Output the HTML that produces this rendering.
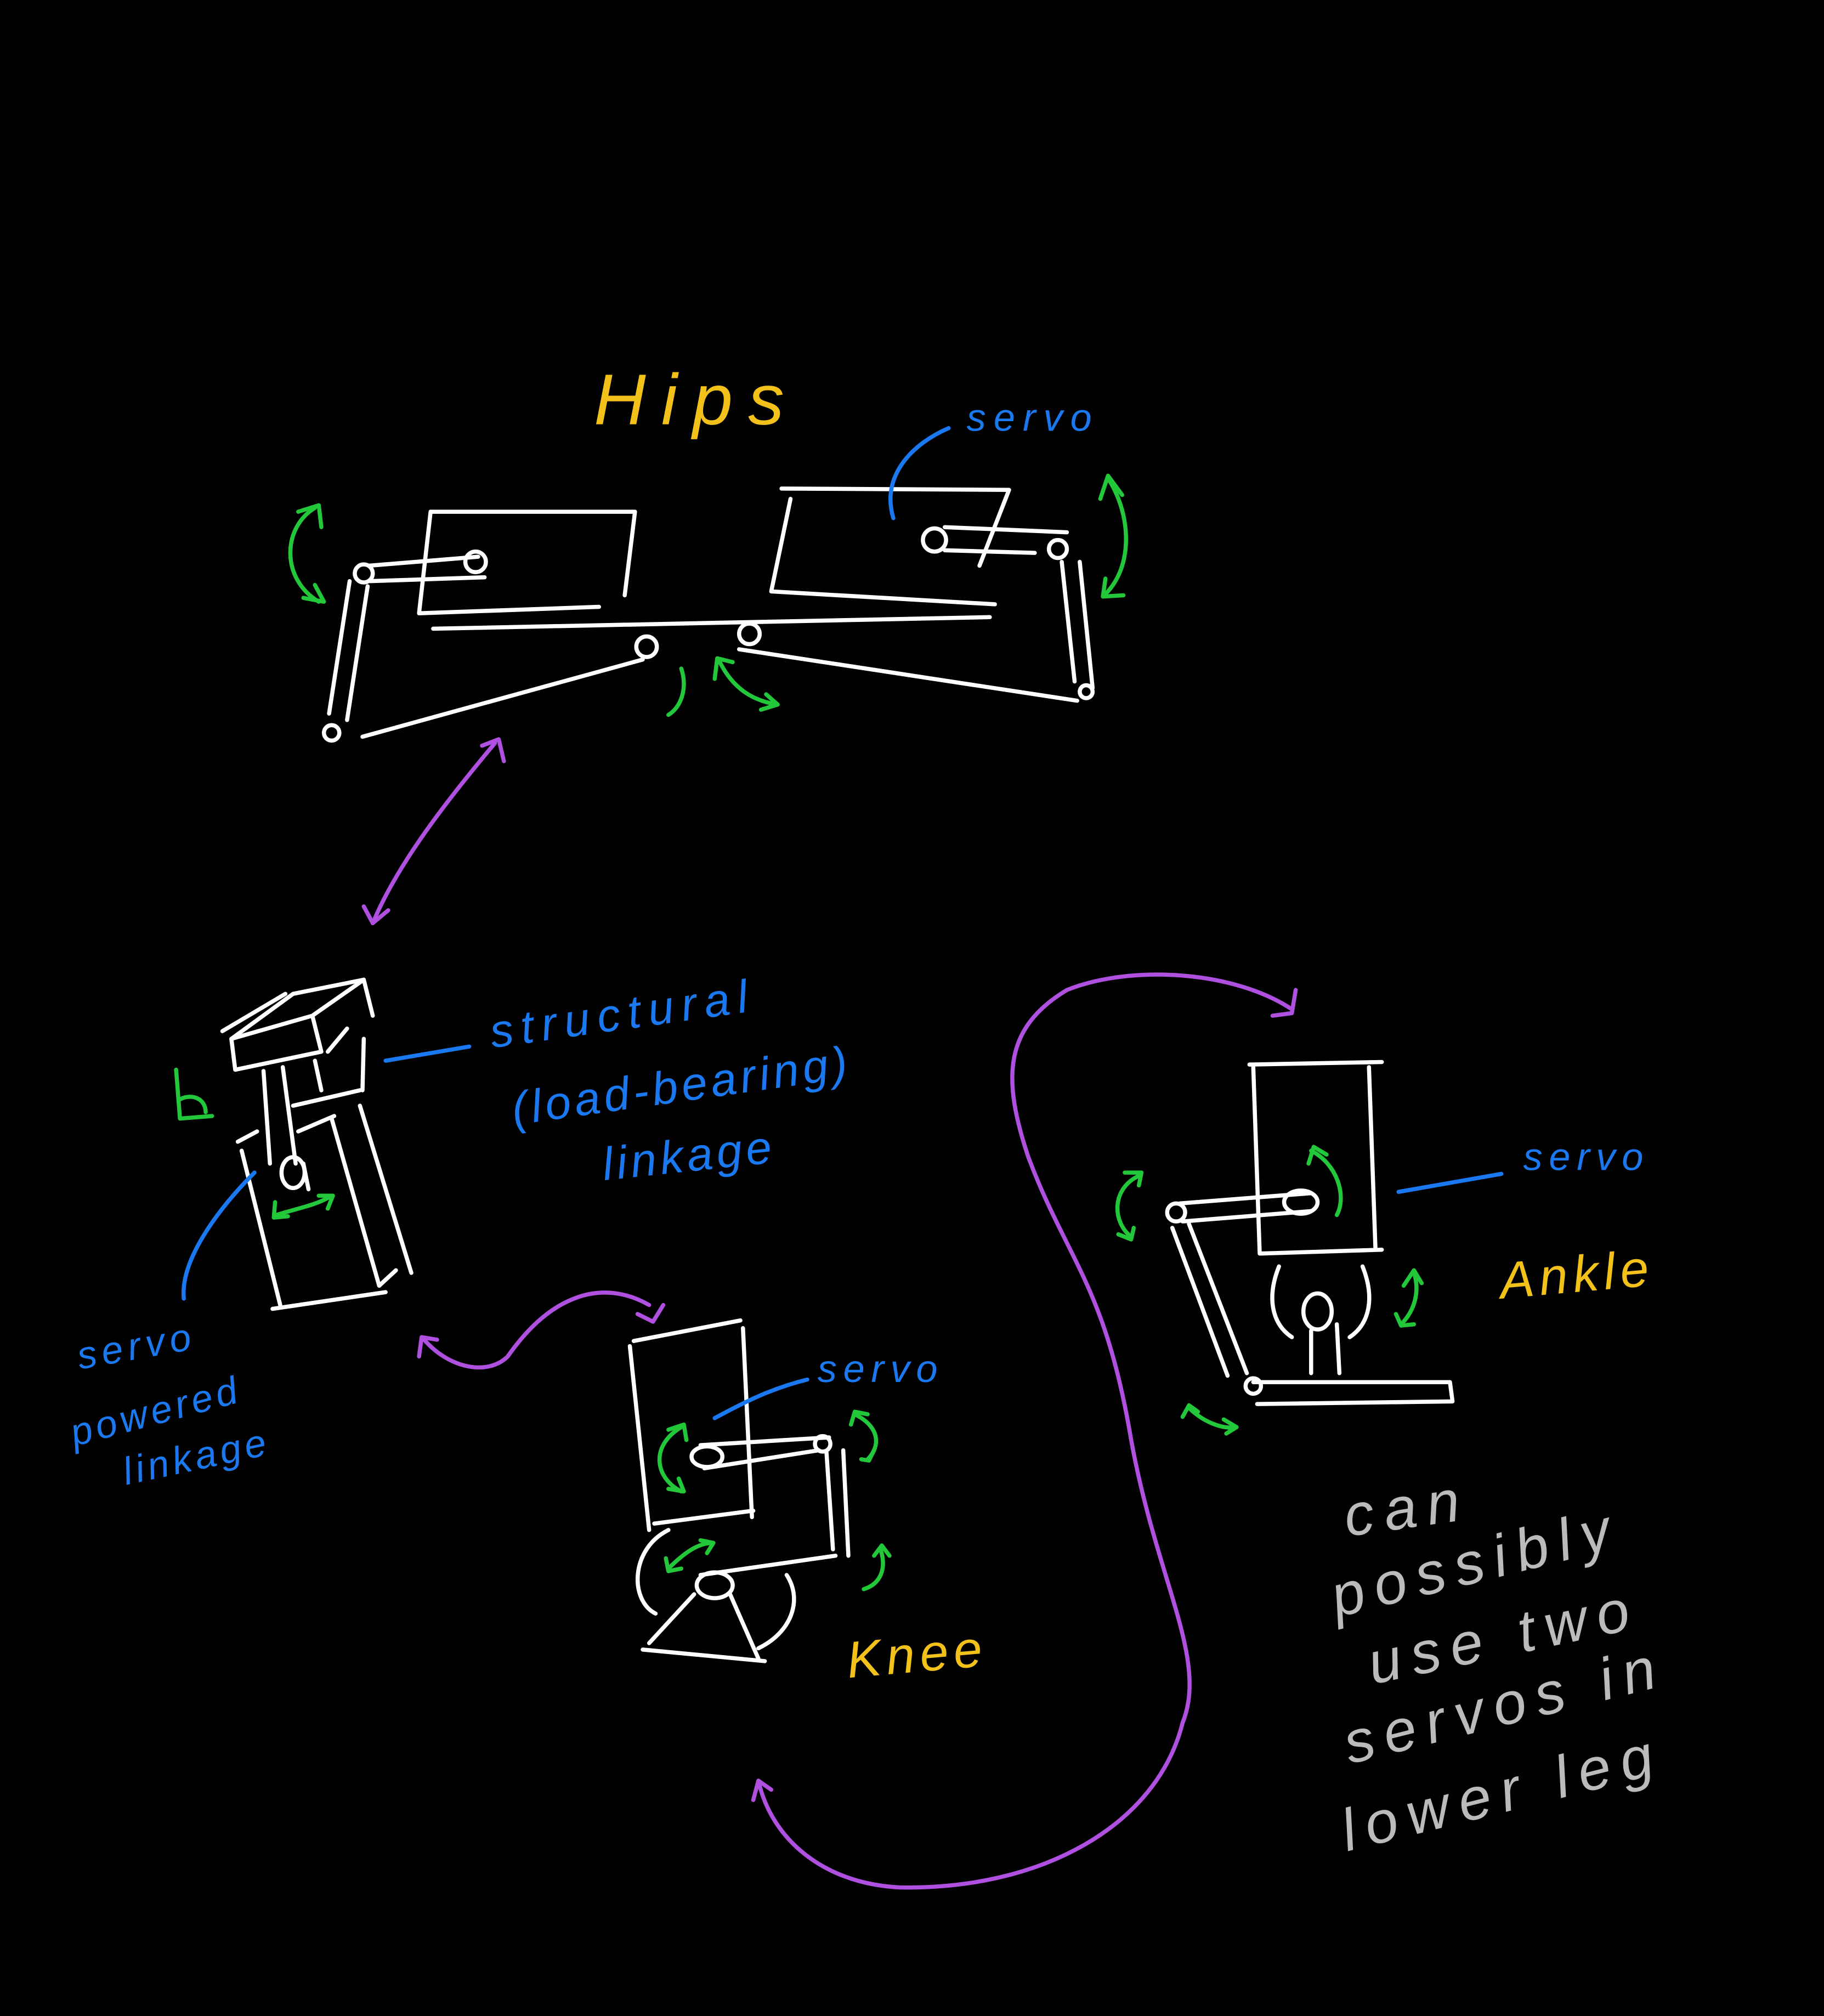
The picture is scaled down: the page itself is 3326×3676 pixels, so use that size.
<!DOCTYPE html>
<html><head><meta charset="utf-8"><style>
html,body{margin:0;padding:0;background:#000;}
svg{display:block;}
text{font-family:"Liberation Sans",sans-serif;}
</style></head><body>
<svg width="3326" height="3676" viewBox="0 0 1419 1568" preserveAspectRatio="none" xmlns="http://www.w3.org/2000/svg">
<rect width="1419" height="1568" fill="#000"/>
<g fill="none" stroke="#fff" stroke-width="3.2" stroke-linecap="round" stroke-linejoin="round">
<path d="M335,398 L494,398 L486,463"/>
<path d="M335,398 L326,477 L466,472"/>
<path d="M287,440 L372,433"/><path d="M288,452 L377,449"/>
<circle cx="370" cy="437" r="8"/><circle cx="283" cy="446" r="7"/>
<path d="M272,452 L256,555"/><path d="M286,456 L270,560"/>
<circle cx="258" cy="570" r="6"/>
<path d="M282,573 L500,513"/>
<circle cx="503" cy="503" r="8"/>
<path d="M337,489 L770,480"/>
<path d="M608,380 L785,381 L762,440"/>
<path d="M615,388 L600,460 L774,470"/>
<path d="M735,410 L830,414"/><path d="M735,428 L805,430"/>
<circle cx="727" cy="420" r="9"/><circle cx="823" cy="427" r="7"/>
<path d="M826,437 L836,530"/><path d="M840,437 L850,535"/>
<circle cx="845" cy="538" r="5"/>
<path d="M575,505 L838,545"/>
<circle cx="583" cy="493" r="8"/>
<path d="M173,802 L222,773"/><path d="M228,773 L283,762 L243,790 L180,808 Z"/>
<path d="M283,762 L290,790"/><path d="M180,808 L183,832 L250,818 L243,790"/>
<path d="M270,800 L255,818"/><path d="M283,808 L282,848"/>
<path d="M205,833 L210,905"/><path d="M220,830 L230,905"/>
<path d="M245,825 L250,848"/><path d="M228,860 L280,848"/><path d="M232,880 L260,868"/>
<path d="M185,888 L200,880"/><path d="M188,895 L218,1015"/>
<path d="M258,870 L295,1000"/><path d="M280,860 L320,990"/>
<path d="M295,1000 L308,988"/><path d="M212,1018 L300,1005"/>
<ellipse cx="228" cy="912" rx="9" ry="12"/><path d="M236,905 L240,925"/>
<path d="M493,1043 L576,1027"/><path d="M490,1047 L505,1190"/>
<path d="M578,1033 L585,1180"/>
<path d="M545,1124 L645,1118"/><path d="M548,1142 L637,1128"/>
<ellipse cx="550" cy="1133" rx="12" ry="8"/><circle cx="640" cy="1123" r="6"/>
<path d="M509,1185 L586,1175"/>
<path d="M643,1130 L648,1205"/><path d="M656,1128 L660,1210"/>
<path d="M520,1190 C490,1205 490,1245 510,1255"/>
<path d="M545,1225 L650,1210"/>
<ellipse cx="556" cy="1233" rx="14" ry="10"/>
<path d="M540,1240 L505,1278"/><path d="M568,1240 L590,1290"/>
<path d="M500,1283 L595,1292"/>
<path d="M612,1225 C625,1245 615,1270 590,1282"/>
<path d="M972,828 L1075,826"/><path d="M975,830 L980,975 L1075,972"/>
<path d="M1065,830 L1070,970"/>
<path d="M918,936 L1020,928"/><path d="M920,950 L1020,942"/>
<circle cx="915" cy="943" r="7"/><ellipse cx="1012" cy="935" rx="13" ry="9"/>
<path d="M912,955 L955,1070"/><path d="M925,952 L970,1068"/>
<path d="M995,985 C985,1010 990,1030 1005,1040"/>
<path d="M1060,985 C1070,1010 1065,1030 1050,1040"/>
<ellipse cx="1025" cy="1020" rx="11" ry="14"/>
<path d="M1020,1035 L1020,1068"/><path d="M1040,1030 L1042,1068"/>
<path d="M975,1075 L1128,1075 L1130,1090 L978,1092"/>
<circle cx="975" cy="1078" r="6"/>
</g>
<g fill="none" stroke="#22c83a" stroke-width="3.2" stroke-linecap="round" stroke-linejoin="round">
<path d="M245,395 C220,410 218,450 248,468"/><path d="M232,398 L248,393 L250,410"/><path d="M236,465 L252,468 L245,455"/>
<path d="M862,372 C880,400 882,440 860,462"/><path d="M856,388 L862,370 L873,385"/><path d="M860,450 L858,464 L874,463"/>
<path d="M530,520 C535,535 530,550 520,556"/>
<path d="M560,515 C570,535 585,545 605,548"/><path d="M556,528 L558,512 L570,515"/><path d="M596,540 L605,548 L592,552"/>
<path d="M137,832 L140,870 L165,868"/><path d="M140,855 C150,850 160,855 160,865"/>
<path d="M215,945 C230,940 245,938 258,930"/><path d="M214,935 L213,947 L224,946"/><path d="M248,930 L259,930 L255,940"/>
<path d="M530,1110 C505,1125 510,1150 530,1160"/><path d="M520,1112 L532,1108 L534,1120"/><path d="M520,1158 L532,1160 L528,1150"/>
<path d="M665,1100 C685,1110 685,1125 675,1135"/><path d="M662,1108 L665,1098 L675,1100"/><path d="M670,1135 L676,1136 L680,1128"/>
<path d="M685,1205 C690,1220 685,1232 672,1236"/><path d="M680,1210 L686,1202 L692,1210"/>
<path d="M520,1220 C535,1205 545,1200 555,1200"/><path d="M518,1212 L520,1222 L530,1220"/><path d="M545,1198 L555,1200 L550,1208"/>
<path d="M885,915 C865,925 865,950 880,962"/><path d="M875,912 L888,912 L886,922"/><path d="M870,960 L880,964 L882,955"/>
<path d="M1020,895 C1040,905 1048,930 1040,945"/><path d="M1018,905 L1022,892 L1032,898"/>
<path d="M1100,990 C1105,1005 1100,1020 1090,1030"/><path d="M1092,1000 L1100,988 L1106,998"/><path d="M1086,1022 L1090,1031 L1100,1030"/>
<path d="M925,1095 C935,1105 950,1112 962,1110"/><path d="M920,1102 L925,1093 L932,1098"/><path d="M952,1104 L962,1110 L954,1115"/>
</g>
<g fill="none" stroke="#1a78f0" stroke-width="3.2" stroke-linecap="round">
<path d="M738,333 C710,345 685,370 695,403"/>
<path d="M300,825 L365,814"/>
<path d="M198,912 C170,940 140,980 143,1010"/>
<path d="M556,1103 C580,1090 600,1080 628,1073"/>
<path d="M1088,927 L1168,913"/>
</g>
<g fill="none" stroke="#b050e0" stroke-width="3.2" stroke-linecap="round" stroke-linejoin="round">
<path d="M385,578 C350,620 310,670 290,718"/><path d="M375,580 L388,575 L392,592"/><path d="M283,705 L290,718 L302,708"/>
<path d="M330,1042 C350,1065 380,1070 395,1055 C430,1005 470,995 505,1015"/><path d="M326,1055 L328,1040 L340,1042"/><path d="M496,1022 L508,1028 L516,1015"/>
<path d="M1005,785 C960,755 880,750 830,770 C780,800 780,840 800,900 C830,980 860,1000 880,1120 C900,1230 940,1290 920,1340 C900,1420 810,1470 700,1468 C640,1465 600,1430 590,1385"/>
<path d="M990,790 L1005,788 L1008,770"/><path d="M586,1400 L590,1385 L600,1392"/>
</g>
<g font-size="30" font-style="italic">
<text x="462" y="330" fill="#f2c21a" font-size="56" letter-spacing="12">Hips</text>
<text x="752" y="335" fill="#1a78f0" letter-spacing="6">servo</text>
<text x="383" y="815" fill="#1a78f0" font-size="36" letter-spacing="6" transform="rotate(-8 383 815)">structural</text>
<text x="400" y="875" fill="#1a78f0" font-size="36" letter-spacing="3" transform="rotate(-8 400 875)">(load-bearing)</text>
<text x="470" y="918" fill="#1a78f0" font-size="36" letter-spacing="3" transform="rotate(-6 470 918)">linkage</text>
<text x="62" y="1065" fill="#1a78f0" letter-spacing="4" transform="rotate(-10 62 1065)">servo</text>
<text x="58" y="1125" fill="#1a78f0" letter-spacing="3" transform="rotate(-15 58 1125)">powered</text>
<text x="98" y="1155" fill="#1a78f0" letter-spacing="3" transform="rotate(-12 98 1155)">linkage</text>
<text x="636" y="1075" fill="#1a78f0" letter-spacing="5">servo</text>
<text x="1185" y="910" fill="#1a78f0" letter-spacing="5">servo</text>
<text x="1168" y="1010" fill="#f2c21a" font-size="40" letter-spacing="4" transform="rotate(-5 1168 1010)">Ankle</text>
<text x="660" y="1305" fill="#f2c21a" font-size="40" letter-spacing="4" transform="rotate(-5 660 1305)">Knee</text>
<g fill="#bbb" font-size="46" letter-spacing="8">
<text x="1048" y="1195" transform="rotate(-8 1048 1195)">can</text>
<text x="1040" y="1258" transform="rotate(-14 1040 1258)">possibly</text>
<text x="1068" y="1310" transform="rotate(-12 1068 1310)">use two</text>
<text x="1050" y="1372" transform="rotate(-14 1050 1372)">servos in</text>
<text x="1048" y="1440" transform="rotate(-14 1048 1440)">lower leg</text>
</g>
</g>
</svg>
</body></html>
